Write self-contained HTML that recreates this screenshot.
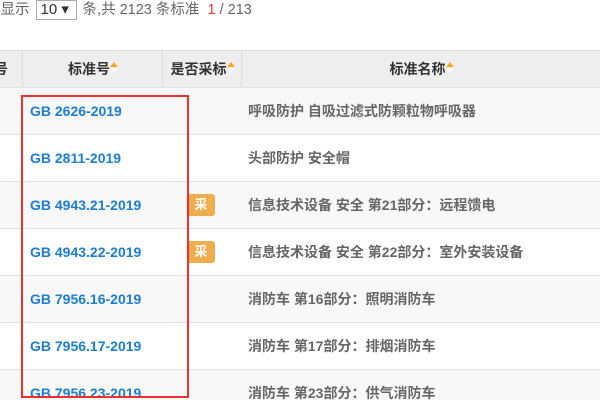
<!DOCTYPE html>
<html><head><meta charset="utf-8"><style>
html,body{margin:0;width:600px;height:400px;overflow:hidden}
body{background:#fff;font-family:"Liberation Sans","Noto Sans CJK SC",sans-serif;position:relative}
.top{position:absolute;left:-14px;top:0;font-size:14.5px;color:#666;line-height:20px;white-space:nowrap}
.sel{display:inline-block;border:1px solid #aaa;width:41px;height:20px;vertical-align:top;color:#333;box-sizing:border-box;padding-left:4px;line-height:18px;font-size:15px;margin:0 2px}
.hdr{position:absolute;left:0;top:50px;width:600px;height:37px;background:#eee;border-top:1px solid #ddd;box-sizing:border-box;font-weight:bold;font-size:14px;color:#333}
.hdr div{position:absolute;top:0;height:36px;line-height:36px;text-align:center;border-left:1px solid #ddd}
.ar{display:inline-block;width:8px;height:12px;position:relative;vertical-align:middle;top:-2px}
.ar:before{content:"";position:absolute;left:0;top:0;border:4px solid transparent;border-bottom:5px solid #f5a623;border-top:0}
.ar:after{content:"";position:absolute;left:0;top:6px;border:4px solid transparent;border-top:5px solid #fff;border-bottom:0}
.row{position:absolute;left:0;width:600px;height:47px;border-top:1px solid #e2e2e2;box-sizing:border-box}
.row .c{position:absolute;left:30px;top:0;line-height:46px;color:#1a7ed6;font-weight:bold;font-size:14px}
.row .n{position:absolute;left:248px;top:0;line-height:46px;color:#666;font-weight:bold;font-size:14px}
.row .b{position:absolute;left:187px;top:12px;width:28px;height:22px;background:#f0ad4e;border-radius:3px;color:#fff;font-size:13px;font-weight:bold;text-align:center;line-height:22px}
.g{background:#f8f8f8}
.red{position:absolute;left:21px;top:95px;width:168px;height:303px;border:2px solid #f03030;box-sizing:border-box}
</style></head><body>
<div class="top">页显示 <span class="sel">10 ▾</span> 条,共 2123 条标准 &nbsp;<span style="color:#e33">1</span> / 213</div>
<div class="hdr">
<div style="left:-20px;width:42px;border-left:none">号</div>
<div style="left:22px;width:140px">标准号<span class="ar"></span></div>
<div style="left:162px;width:79px">是否采标<span class="ar"></span></div>
<div style="left:241px;width:359px">标准名称<span class="ar"></span></div>
</div>
<div class="row g" style="top:87px"><span class="c">GB 2626-2019</span><span class="n">呼吸防护 自吸过滤式防颗粒物呼吸器</span></div>
<div class="row" style="top:134px"><span class="c">GB 2811-2019</span><span class="n">头部防护 安全帽</span></div>
<div class="row g" style="top:181px"><span class="c">GB 4943.21-2019</span><span class="b">采</span><span class="n">信息技术设备 安全 第21部分：远程馈电</span></div>
<div class="row" style="top:228px"><span class="c">GB 4943.22-2019</span><span class="b">采</span><span class="n">信息技术设备 安全 第22部分：室外安装设备</span></div>
<div class="row g" style="top:275px"><span class="c">GB 7956.16-2019</span><span class="n">消防车 第16部分：照明消防车</span></div>
<div class="row" style="top:322px"><span class="c">GB 7956.17-2019</span><span class="n">消防车 第17部分：排烟消防车</span></div>
<div class="row g" style="top:369px"><span class="c">GB 7956.23-2019</span><span class="n">消防车 第23部分：供气消防车</span></div>
<div class="red"></div>
</body></html>
